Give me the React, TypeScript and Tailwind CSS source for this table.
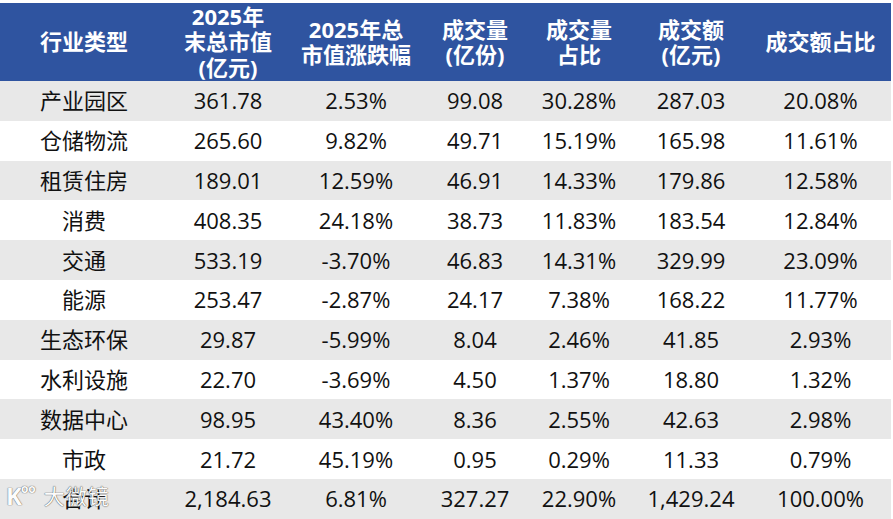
import React from "react";

const rows: string[][] = [
  ["产业园区", "361.78", "2.53%", "99.08", "30.28%", "287.03", "20.08%"],
  ["仓储物流", "265.60", "9.82%", "49.71", "15.19%", "165.98", "11.61%"],
  ["租赁住房", "189.01", "12.59%", "46.91", "14.33%", "179.86", "12.58%"],
  ["消费", "408.35", "24.18%", "38.73", "11.83%", "183.54", "12.84%"],
  ["交通", "533.19", "-3.70%", "46.83", "14.31%", "329.99", "23.09%"],
  ["能源", "253.47", "-2.87%", "24.17", "7.38%", "168.22", "11.77%"],
  ["生态环保", "29.87", "-5.99%", "8.04", "2.46%", "41.85", "2.93%"],
  ["水利设施", "22.70", "-3.69%", "4.50", "1.37%", "18.80", "1.32%"],
  ["数据中心", "98.95", "43.40%", "8.36", "2.55%", "42.63", "2.98%"],
  ["市政", "21.72", "45.19%", "0.95", "0.29%", "11.33", "0.79%"],
  ["合计", "2,184.63", "6.81%", "327.27", "22.90%", "1,429.24", "100.00%"],
];

const headers: string[][] = [
  ["行业类型"],
  ["2025年", "末总市值", "(亿元)"],
  ["2025年总", "市值涨跌幅"],
  ["成交量", "(亿份)"],
  ["成交量", "占比"],
  ["成交额", "(亿元)"],
  ["成交额占比"],
];

const grid =
  "grid grid-cols-[168px_120px_136px_102px_106px_118px_141px] w-[891px]";

export default function App() {
  return (
    <div
      className="relative w-[893px] h-[519px] overflow-hidden bg-white pt-[3px]"
      style={{ fontFamily: '"Open Sans", "Noto Sans CJK SC", sans-serif' }}
    >
      <div className={`${grid} h-[78px] bg-[#2f54a0] text-white font-bold text-[22px] leading-[25.5px]`}>
        {headers.map((h, i) => (
          <div key={i} className="flex flex-col items-center justify-center">
            {h.map((l, j) => (
              <span key={j}>{l}</span>
            ))}
          </div>
        ))}
      </div>
      {rows.map((r, i) => (
        <div
          key={i}
          className={`${grid} h-[39.8px] text-[22px] text-[#111] ${i % 2 === 0 ? "bg-[#e8e8e8]" : "bg-white"}`}
        >
          {r.map((c, j) => (
            <div key={j} className="flex items-center justify-center">
              {c}
            </div>
          ))}
        </div>
      ))}
      <div className="absolute left-[6px] top-[484px] flex items-center gap-[8px] opacity-90">
        <span className="flex items-start text-[24px] font-bold text-white [text-shadow:0_0_1px_#555,0_0_1px_#555] leading-none">
          K<span className="text-[12px] -ml-[1px] -mt-[1px]">oo</span>
        </span>
        <span className="text-[21px] text-white [text-shadow:0_0_1px_#444,0_0_1px_#444] leading-none tracking-[1px]">
          大微镜
        </span>
      </div>
    </div>
  );
}
